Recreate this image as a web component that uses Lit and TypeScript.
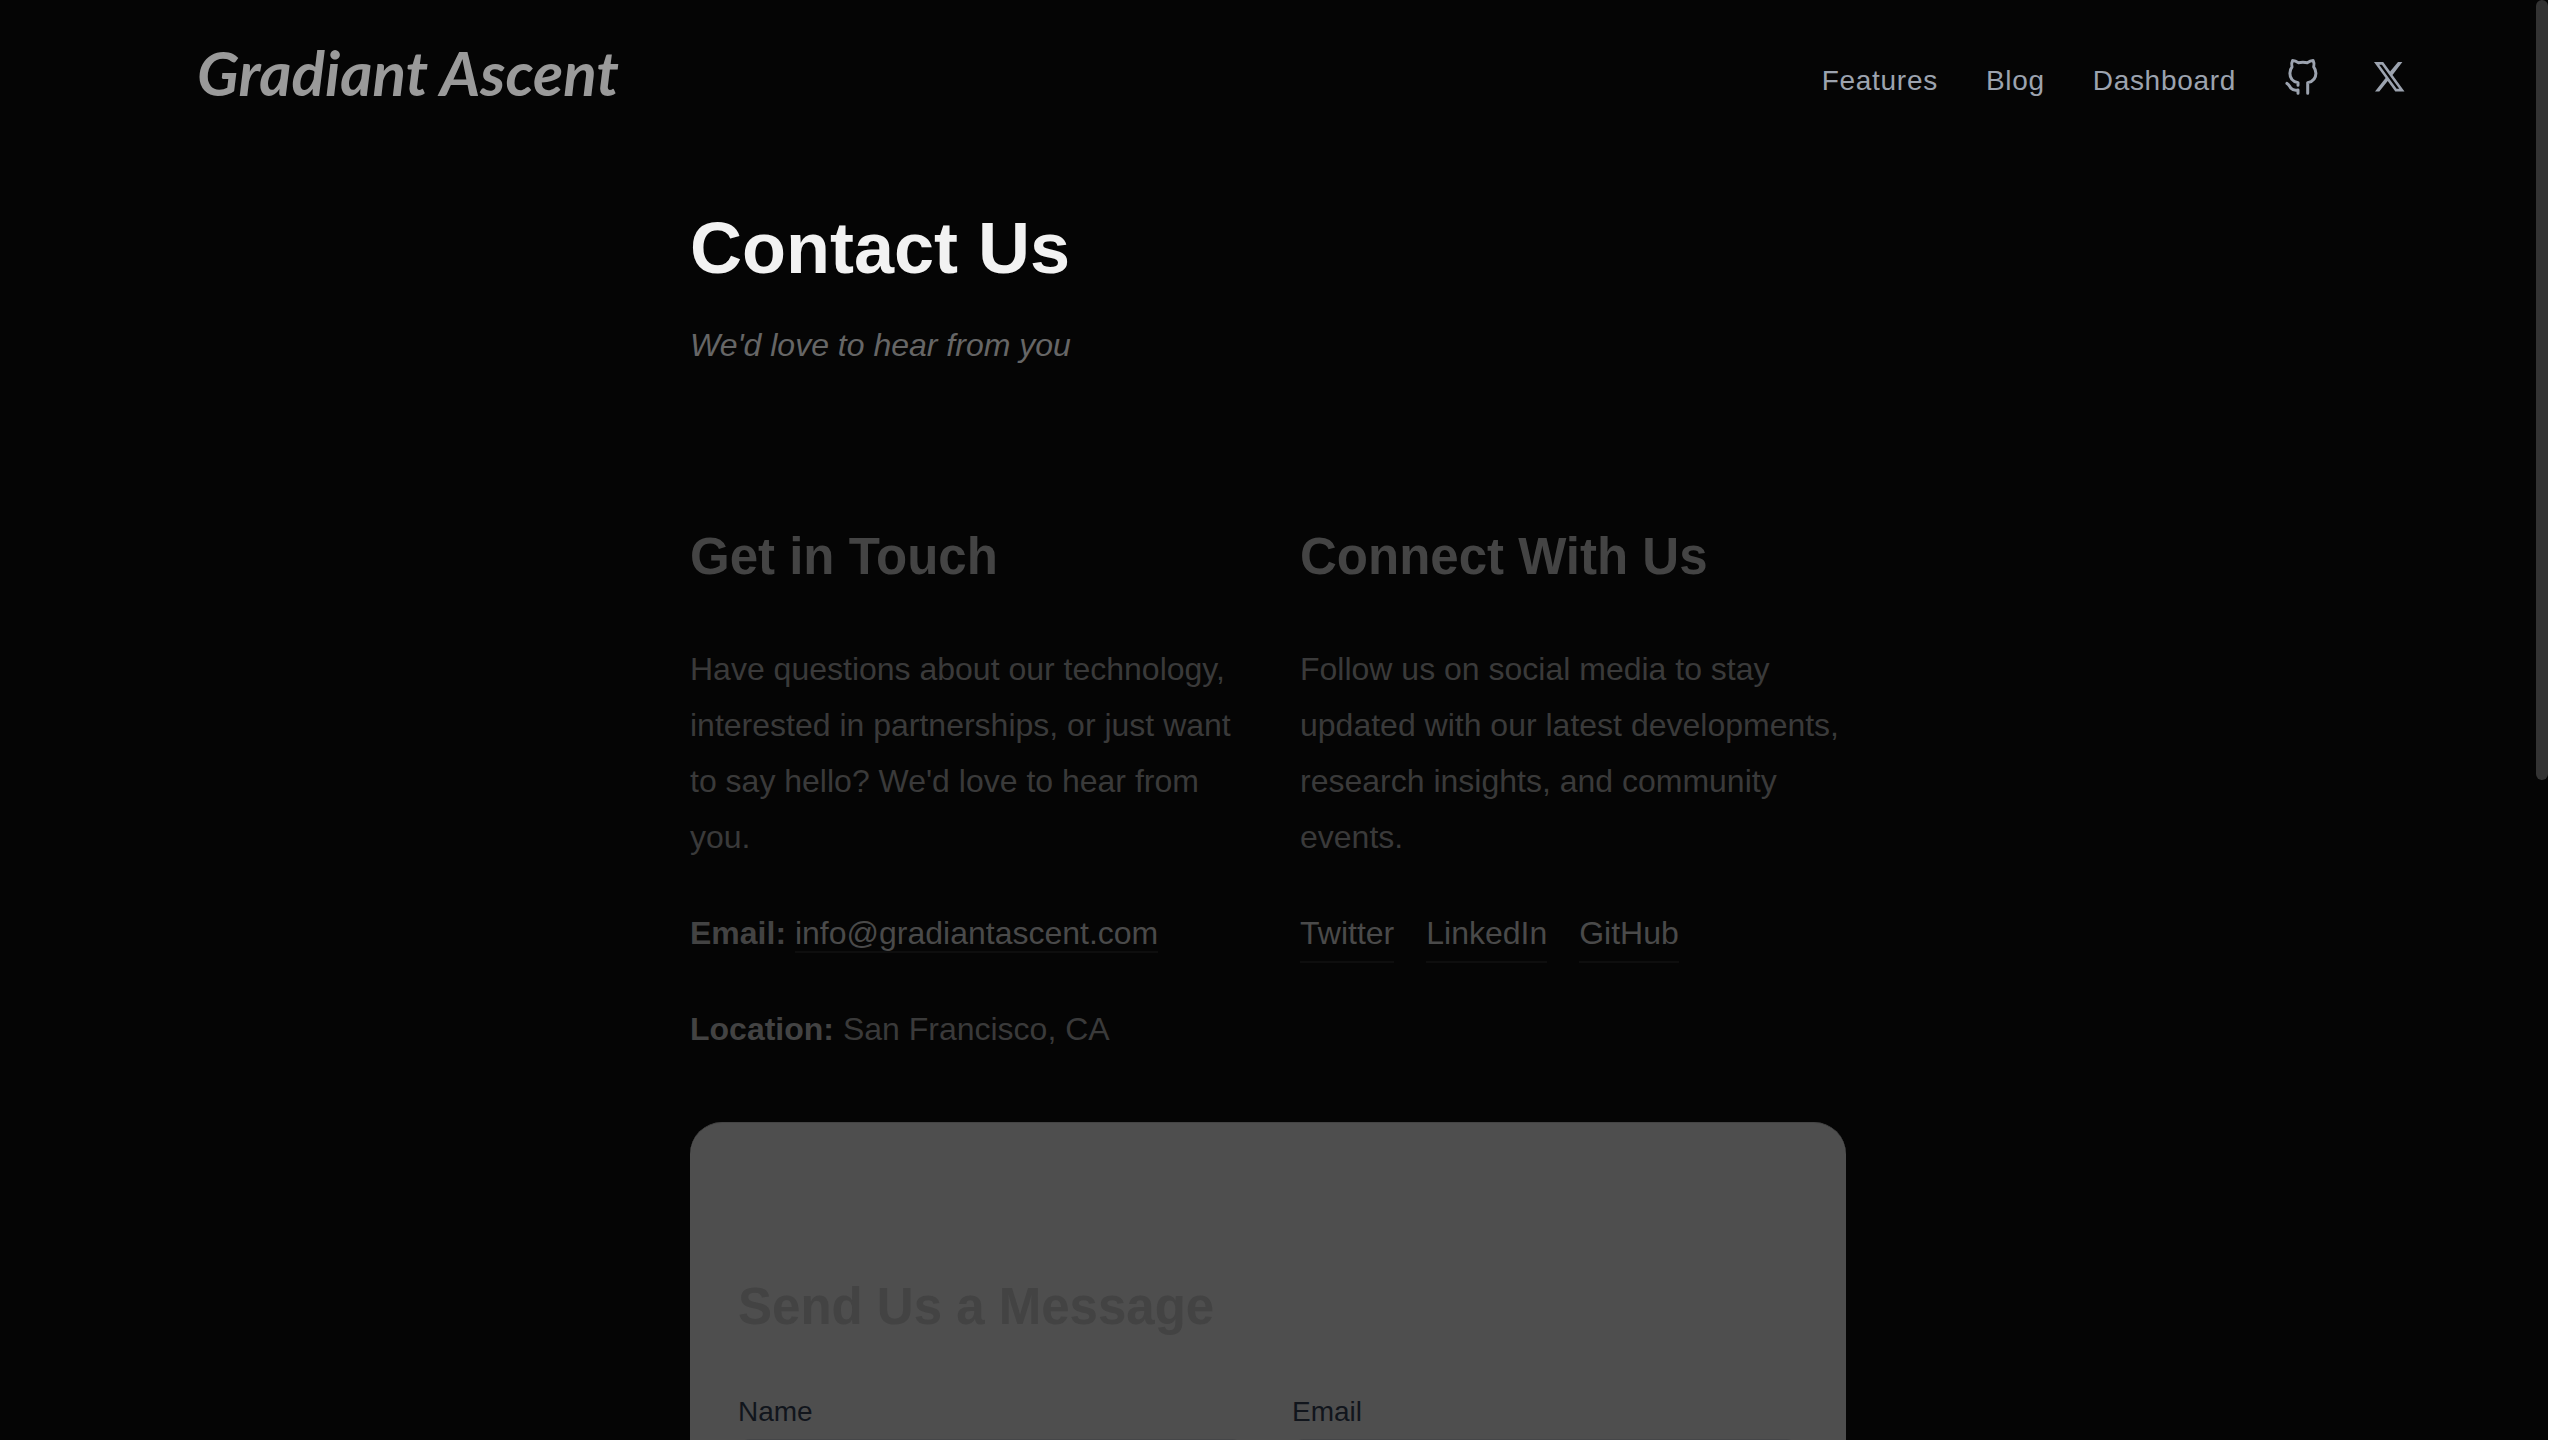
import { LitElement, html, css } from "lit";
import { customElement } from "lit/decorators.js";

@customElement("site-header")
class SiteHeader extends LitElement {
  static styles = css`
    :host { display: block; }
    .bar {
      display: flex;
      align-items: center;
      justify-content: space-between;
      height: 160px;
      padding: 0 128px 0 197px;
    }
    .brand {
      color: #9a9a9a;
      font: italic 700 62px/80px Lato, sans-serif;
      text-decoration: none;
      padding-bottom: 16px;
    }
    .links { display: flex; align-items: center; gap: 48px; }
    .link {
      color: #9ca3af;
      font-size: 28px;
      line-height: 40px;
      letter-spacing: 0.025em;
      padding-top: 2px;
      text-decoration: none;
    }
    .icon { display: flex; color: #9ca3af; padding-bottom: 4px; }
    .github { width: 40px; height: 40px; }
    .x { width: 36px; height: 36px; }
  `;
  render() {
    return html`
      <header class="bar">
        <a class="brand" href="#">Gradiant Ascent</a>
        <nav class="links">
          <a class="link" href="#features">Features</a>
          <a class="link" href="#blog">Blog</a>
          <a class="link" href="#dashboard">Dashboard</a>
          <a class="icon" href="#github" aria-label="GitHub">
            <svg class="github" viewBox="0 0 40 40" fill="none" stroke="currentColor" stroke-width="3" stroke-linecap="round" stroke-linejoin="round">
              <path d="M14 27.200V24.600C9 23.600 5.900 20.500 5.900 15.200C5.900 12.500 6.700 10.600 8 9C7.400 6.800 7.600 4.200 8.600 2.400C10.800 2.500 12.600 3.400 14.200 4.700C17.200 4.100 20.500 4.100 23.500 4.700C25.100 3.400 26.900 2.500 29.100 2.400C30.100 4.200 30.300 6.800 29.700 9C31 10.600 31.900 12.500 31.900 15.200C31.900 20.500 28.700 23.600 23.700 24.600V35.300"/>
              <path d="M2.900 25.300C5.200 26.400 5.600 28.600 7 30.300C8.800 32.400 11.200 32.500 14 32V35.300"/>
            </svg>
          </a>
          <a class="icon" href="#x" aria-label="X">
            <svg class="x" viewBox="2 2 36 36" fill="currentColor" fill-rule="evenodd">
              <path d="M4 4H13.200L20.100 13.600L28 4H32.400L22.500 16.900L34.500 33.500H25.300L17.700 23L9.300 33.500H5L15.600 20.100ZM9.200 6.700L26.600 30.800H29.300L11.900 6.700Z"/>
            </svg>
          </a>
        </nav>
      </header>
    `;
  }
}

@customElement("contact-form")
class ContactForm extends LitElement {
  static styles = css`
    :host { display: block; }
    .card {
      box-sizing: border-box;
      padding: 144px 48px 48px;
      border-radius: 32px;
      background: #4e4e4e;
      border-top: 1px solid #444;
    }
    .title { margin: 0 0 45px; color: #434343; font-size: 51px; line-height: 80px; }
    .row { display: grid; grid-template-columns: 1fr 1fr; gap: 48px; }
    .field { display: flex; flex-direction: column; gap: 7px; }
    .label { color: #11151c; font-size: 28px; line-height: 40px; }
    .input {
      box-sizing: border-box;
      width: 100%;
      height: 80px;
      border: 2px solid #454648;
      border-radius: 12px;
      background: #4e4e4e;
      padding: 0 24px;
      font: inherit;
    }
  `;
  render() {
    return html`
      <form class="card">
        <h2 class="title">Send Us a Message</h2>
        <div class="row">
          <div class="field">
            <label class="label" for="name">Name</label>
            <input class="input" id="name" type="text" />
          </div>
          <div class="field">
            <label class="label" for="email">Email</label>
            <input class="input" id="email" type="email" />
          </div>
        </div>
      </form>
    `;
  }
}

@customElement("app-root")
class AppRoot extends LitElement {
  static styles = css`
    :host {
      display: flex;
      height: 100vh;
      overflow: hidden;
      background: #050505;
      font-family: "Liberation Sans", Arial, sans-serif;
    }
    .page { flex: 1; min-width: 0; }
    .track { width: 12px; border-right: 12px solid #fff; }
    .thumb { height: 54.167%; border-radius: 6px; background: #333; }
    .content { max-width: 1156px; margin: 0 auto; padding: 40px 48px 0; }
    .title { margin: 0; color: #f2f2f2; font-size: 72px; line-height: 96px; }
    .tagline { margin: 21px 0 0; color: #666; font-size: 32px; line-height: 56px; font-style: italic; }
    .columns { display: grid; grid-template-columns: 1fr 1fr; gap: 64px; padding: 144px 0 65px; }
    .heading { margin: 0 0 44px; color: #444; font-size: 51px; line-height: 80px; }
    .text { margin: 0 0 40px; color: #3a3a3a; font-size: 32px; line-height: 56px; }
    .text:last-child { margin-bottom: 0; }
    .strong { color: #434343; }
    .link { color: #4a4a4a; text-decoration: none; border-bottom: 2px solid #0e0e0e; }
    .social { display: flex; gap: 32px; font-size: 32px; line-height: 56px; }
  `;
  render() {
    return html`
      <div class="page">
        <site-header></site-header>
        <main class="content">
          <h1 class="title">Contact Us</h1>
          <p class="tagline">We'd love to hear from you</p>
          <div class="columns">
            <section>
              <h2 class="heading">Get in Touch</h2>
              <p class="text">Have questions about our technology, interested in partnerships, or just want to say hello? We'd love to hear from you.</p>
              <p class="text"><strong class="strong">Email:</strong> <a class="link" href="mailto:info@gradiantascent.com">info@gradiantascent.com</a></p>
              <p class="text"><strong class="strong">Location:</strong> San Francisco, CA</p>
            </section>
            <section>
              <h2 class="heading">Connect With Us</h2>
              <p class="text">Follow us on social media to stay updated with our latest developments, research insights, and community events.</p>
              <div class="social">
                <a class="link" href="#twitter">Twitter</a>
                <a class="link" href="#linkedin">LinkedIn</a>
                <a class="link" href="#github">GitHub</a>
              </div>
            </section>
          </div>
          <contact-form></contact-form>
        </main>
      </div>
      <div class="track"><div class="thumb"></div></div>
    `;
  }
}
